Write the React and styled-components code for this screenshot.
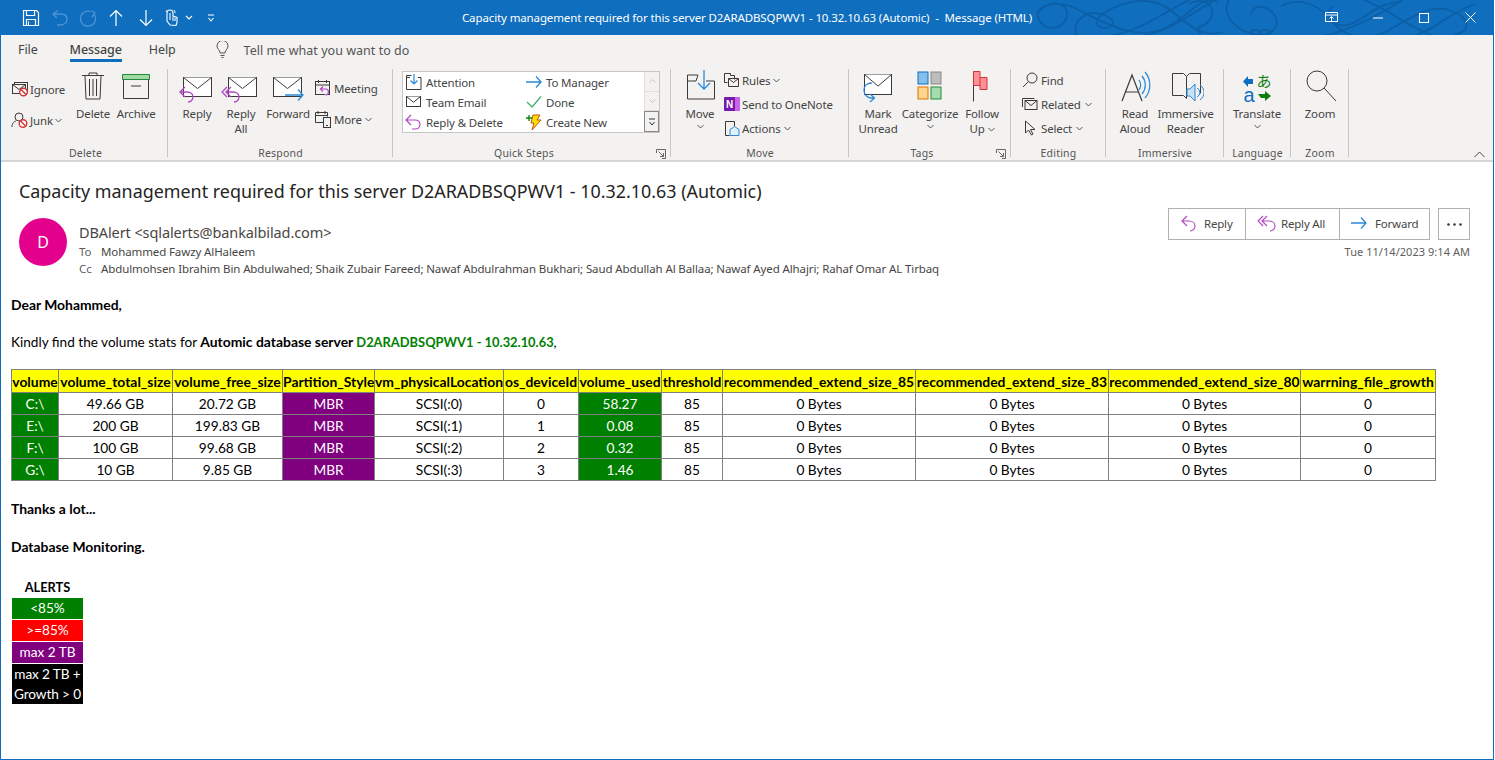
import React from 'react'
import styled, { createGlobalStyle } from 'styled-components'

const BLUE = '#106ebe'
const PURPLE = '#b146c2'
const SKY = '#2b88d8'
const INK = '#3b3a39'
const UI_FONT = '"Noto Sans", "Open Sans", sans-serif'
const MAIL_FONT = 'Lato, "Liberation Sans", sans-serif'

const GlobalStyle = createGlobalStyle`
  html, body { margin: 0; padding: 0; background: #fff; }
  body { font-family: ${UI_FONT}; overflow: hidden; }
  * { box-sizing: border-box; }
`

const Window = styled.div`
  width: 1494px;
  height: 760px;
  display: flex;
  flex-direction: column;
  border: 1px solid ${BLUE};
  border-top: 0;
  background: #fff;
  overflow: hidden;
`

/* title bar */
const TitleBar = styled.header`
  position: relative;
  flex: 0 0 35px;
  display: grid;
  grid-template-columns: 1fr auto 1fr;
  align-items: center;
  background: ${BLUE};
  color: #fff;
`
const Flourish = styled.svg`
  position: absolute;
  right: 0;
  top: 0;
  width: 500px;
  height: 35px;
  pointer-events: none;
`
const QuickAccess = styled.div`
  display: flex;
  align-items: center;
  padding-left: 21px;
  position: relative;
`
const QuickItem = styled.div`
  display: flex;
  margin-left: ${p => p.$gap || 0}px;
`
const Title = styled.div`
  position: relative;
  font-size: 11.5px;
  letter-spacing: -0.12px;
  white-space: pre;
`
const WindowControls = styled.div`
  position: relative;
  display: flex;
  justify-content: flex-end;
`
const WindowButton = styled.div`
  width: 46px;
  height: 35px;
  display: flex;
  align-items: center;
  justify-content: center;
`

/* tabs */
const TabBar = styled.nav`
  flex: 0 0 30px;
  display: flex;
  align-items: flex-start;
  padding-left: 17px;
  background: #f3f2f1;
  color: #444;
  font-size: 12.5px;
`
const Tab = styled.div`
  height: 27px;
  margin-right: ${p => p.$gap}px;
  padding-top: 6px;
  line-height: 18px;
  letter-spacing: -0.1px;
  font-weight: ${p => (p.$active ? 500 : 400)};
  border-bottom: ${p => (p.$active ? `3px solid ${BLUE}` : '0')};
`
const TellMe = styled.div`
  display: flex;
  align-items: center;
  gap: 15px;
  height: 27px;
  margin-left: 40px;
  padding-top: 3px;
  letter-spacing: 0.03px;
  color: #555;
`

/* ribbon */
const Ribbon = styled.section`
  position: relative;
  flex: 0 0 97px;
  display: flex;
  padding-left: 2px;
  background: #f3f2f1;
  border-bottom: 2px solid #d6d5d3;
  color: #444;
  font-size: 11.5px;
  letter-spacing: -0.15px;
  line-height: 15px;
`
const GroupBox = styled.div`
  position: relative;
  width: ${p => p.$width}px;
  height: 95px;
  display: flex;
  flex-direction: column;
  padding-top: 4px;
  &::after {
    content: '';
    position: absolute;
    right: 0;
    top: 4px;
    bottom: 3px;
    width: 1px;
    background: #c8c6c4;
  }
`
const GroupBody = styled.div`
  flex: 1;
  display: flex;
  padding-left: ${p => p.$pad || 0}px;
`
const GroupLabel = styled.div`
  height: 14px;
  padding-right: ${p => (p.$launcher ? 16 : 0)}px;
  text-align: center;
  font-size: 10.5px;
  letter-spacing: 0.2px;
  color: #555;
`
const Launcher = styled.svg`
  position: absolute;
  right: 5px;
  bottom: 1px;
`
const LargeBtn = styled.div`
  width: ${p => p.$width}px;
  margin-left: ${p => p.$left || 0}px;
  display: flex;
  flex-direction: column;
  align-items: center;
  white-space: nowrap;
  text-align: center;
  svg.main { flex: 0 0 36px; margin-bottom: 1px; }
`
const Chevron = styled.svg`
  display: block;
  margin: 3px auto 0;
`
const InlineChevron = styled.svg`
  margin-left: 1px;
`
const UpChevron = styled.svg`
  margin-left: 3px;
  vertical-align: 1px;
`
const SmallStack = styled.div`
  display: flex;
  flex-direction: column;
  gap: ${p => p.$gap}px;
  padding-top: ${p => p.$top}px;
  margin-left: ${p => p.$left || 0}px;
`
const SmallBtn = styled.div`
  display: flex;
  align-items: center;
  gap: ${p => p.$gap || 2}px;
  height: 20px;
  white-space: nowrap;
`
const Gallery = styled.div`
  width: 258px;
  height: 62px;
  margin: 2px 0 0 9px;
  display: flex;
  background: #fff;
  border: 1px solid #c8c6c4;
`
const GalleryGrid = styled.div`
  flex: 1;
  display: grid;
  grid-template-columns: 121px 1fr;
  grid-auto-rows: 20px;
  padding: 0 0 0 2px;
`
const GalleryItem = styled.div`
  display: flex;
  align-items: center;
  gap: 4px;
  white-space: nowrap;
`
const GalleryScroll = styled.div`
  width: 15px;
  display: flex;
  flex-direction: column;
  border-left: 1px solid #e1dfdd;
`
const ScrollBtn = styled.div`
  flex: 1;
  display: flex;
  align-items: center;
  justify-content: center;
  background: #f3f2f1;
  border-bottom: 1px solid #e1dfdd;
  &:last-child {
    border: 1px solid #8a8886;
    margin-left: -1px;
  }
`
const Collapse = styled.svg`
  position: absolute;
  right: 8px;
  bottom: 2px;
`

/* reading pane */
const Pane = styled.main`
  flex: 1;
  padding: 0 23px 0 18px;
  background: #fff;
`
const Subject = styled.h1`
  margin: 16px 0 0;
  font-size: 17.9px;
  line-height: 26px;
  font-weight: 400;
  color: #252423;
`
const HeaderRow = styled.div`
  display: flex;
  justify-content: space-between;
  margin-top: 4px;
  height: 74px;
`
const Sender = styled.div`
  display: flex;
  gap: 12px;
  padding-top: 10px;
`
const Avatar = styled.div`
  width: 48px;
  height: 48px;
  border-radius: 50%;
  background: #e3008c;
  color: #fff;
  font-size: 16px;
  display: flex;
  align-items: center;
  justify-content: center;
`
const SenderLines = styled.div`
  display: flex;
  flex-direction: column;
  padding-top: 4px;
`
const FromLine = styled.div`
  font-size: 14.5px;
  line-height: 20px;
  color: #484644;
  letter-spacing: -0.1px;
`
const RecipientLine = styled.div`
  display: flex;
  font-size: 11.5px;
  line-height: 17px;
  letter-spacing: -0.11px;
  color: #484644;
  margin-top: 1px;
  white-space: nowrap;
  & + & { margin-top: 0; }
`
const RecipientTag = styled.span`
  width: 22px;
  color: #605e5c;
`
const Actions = styled.div`
  display: flex;
  flex-direction: column;
  align-items: flex-end;
  gap: 4px;
`
const ActionRow = styled.div`
  display: flex;
  gap: 8px;
`
const ActionGroup = styled.div`
  display: flex;
  height: 32px;
  border: 1px solid #b3b0ad;
`
const ActionBtn = styled.div`
  display: flex;
  align-items: center;
  gap: 5px;
  width: ${p => p.$width}px;
  padding: 0 0 2px 11px;
  font-size: 11.5px;
  letter-spacing: -0.2px;
  color: #484644;
  & + & { border-left: 1px solid #b3b0ad; }
`
const MoreBtn = styled.div`
  width: 32px;
  height: 32px;
  border: 1px solid #b3b0ad;
  display: flex;
  align-items: center;
  justify-content: center;
`
const DateText = styled.div`
  font-size: 11px;
  letter-spacing: 0.04px;
  color: #605e5c;
`

/* message body */
const MailBody = styled.div`
  margin-left: -8px;
  margin-top: 14px;
  font-family: ${MAIL_FONT};
  font-size: 13.6px;
  color: #000;
  b { font-size: 13.9px; }
`
const Para = styled.p`
  margin: 0 0 ${p => p.$after}px;
  line-height: 17px;
  font-weight: ${p => (p.$bold ? 700 : 400)};
  font-size: ${p => (p.$bold ? '13.9px' : 'inherit')};
  white-space: nowrap;
`
const Highlight = styled.span`
  color: green;
  font-weight: 700;
  font-size: 12.9px;
`
const StatsTable = styled.table`
  border-collapse: collapse;
  table-layout: fixed;
  width: 1425px;
  margin: 0 0 19px;
  th, td {
    border: 1px solid #808080;
    height: 22px;
    padding: 0;
    text-align: center;
    white-space: nowrap;
    overflow: hidden;
  }
  th { background: #ff0; height: 23px; font-weight: 700; font-size: 13.9px; }
  td { font-size: 13.7px; }
`
const Cell = styled.td`
  background: ${p => p.$bg || '#fff'};
  color: ${p => (p.$bg ? '#fff' : '#000')};
`
const Legend = styled.div`
  width: 71px;
  margin: 0 0 0 1px;
  text-align: center;
`
const LegendTitle = styled.div`
  height: 21px;
  line-height: 21px;
  font-size: 12.8px;
  font-weight: 700;
`
const LegendItem = styled.div`
  background: ${p => p.$bg};
  color: #fff;
  line-height: ${p => (p.$tall ? '20px' : '21px')};
  margin-bottom: 1px;
  white-space: nowrap;
  letter-spacing: ${p => (p.$tall ? '-0.1px' : '0')};
`

/* icons */
const Svg = ({ w = 16, h = 16, children, ...rest }) => (
  <svg width={w} height={h} viewBox={`0 0 ${w} ${h}`} fill="none" {...rest}>
    {children}
  </svg>
)

const Chev = ({ as: C = Chevron }) => (
  <C width="7" height="5" viewBox="0 0 7 5" fill="none">
    <path d="M.5 1l3 3 3-3" stroke="#555" />
  </C>
)

const Envelope = ({ x = 0, y = 0, w = 28, h = 19, color = INK }) => (
  <g stroke={color} fill="#fff" transform={`translate(${x} ${y})`}>
    <rect x=".5" y=".5" width={w} height={h} />
    <path d={`M.5 .5l${w / 2} ${h * 0.58} ${w / 2} ${-h * 0.58}`} />
  </g>
)

const ReplyArrow = ({ x = 0, y = 0, color = PURPLE, sw = 1.3 }) => (
  <path
    transform={`translate(${x} ${y})`}
    d="M6 1L1 6l5 5M1 6h7c4 0 6 2.500 6 5s-2 5-5 5"
    stroke={color}
    strokeWidth={sw}
  />
)

const ReplyAllArrow = ({ x = 0, y = 0, sw = 1.3 }) => (
  <path
    transform={`translate(${x} ${y})`}
    d="M6 1L1 6l5 5M10 1L5 6l5 5M5 6h7c4 0 6 2.500 6 5s-2 5-5 5"
    stroke={PURPLE}
    strokeWidth={sw}
  />
)

const ForwardArrow = ({ x = 0, y = 0, len = 18 }) => (
  <path
    transform={`translate(${x} ${y})`}
    d={`M0 6h${len}M${len - 5} 0.5L${len} 6l-5 5.500`}
    stroke={SKY}
    strokeWidth="1.3"
  />
)

const BigIcon = ({ children, w = 40 }) => (
  <svg className="main" width={w} height="36" viewBox={`0 0 ${w} 36`} fill="none">
    {children}
  </svg>
)

const SaveIcon = () => (
  <Svg w={18} h={18}>
    <path d="M1.500 1.500h13l2 2v13h-15z" stroke="#fff" strokeWidth="1.200" />
    <path d="M4.500 1.500v5h8v-5M4.500 16.500v-6h9v6" stroke="#fff" strokeWidth="1.200" />
    <path d="M6.500 12.500v4" stroke="#fff" />
  </Svg>
)
const UndoIcon = () => (
  <Svg w={18} h={18}>
    <path d="M7 1.500L2 5l4 4M2 5h8c4 0 6 2.500 6 5.500S13 16 10 16H6" stroke="#4d94d4" strokeWidth="1.300" />
  </Svg>
)
const RedoIcon = () => (
  <Svg w={18} h={18}>
    <path d="M12 1.500l4 2.500-3 4M15.500 6A7.500 7.500 0 1 1 11 2.500" stroke="#4d94d4" strokeWidth="1.300" />
  </Svg>
)
const ArrowUp = () => (
  <Svg w={14} h={18}>
    <path d="M7 17V1.500M1 7.500l6-6 6 6" stroke="#fff" strokeWidth="1.200" />
  </Svg>
)
const ArrowDown = () => (
  <Svg w={14} h={18}>
    <path d="M7 1v15.500M1 10.500l6 6 6-6" stroke="#fff" strokeWidth="1.200" />
  </Svg>
)
const TouchIcon = () => (
  <Svg w={14} h={18}>
    <path d="M5 16l-3-4V4a3 3 0 0 1 6 0v3l4 1.500v5L11 16.500z" stroke="#fff" strokeWidth="1.100" />
    <path d="M5 4v7M8 8v4M10 9v3" stroke="#fff" />
    <path d="M1 2.500A3.800 3.800 0 0 1 2 1M9 1a4 4 0 0 1 1 3" stroke="#fff" />
  </Svg>
)
const WhiteChev = () => (
  <Svg w={8} h={5}>
    <path d="M1 1l3 3 3-3" stroke="#fff" strokeWidth="1.100" />
  </Svg>
)
const Customize = () => (
  <Svg w={8} h={8}>
    <path d="M1 1h6M1.500 4l2.500 3 2.500-3" stroke="#fff" strokeWidth="1.100" />
  </Svg>
)

const NoSign = ({ x, y }) => (
  <g transform={`translate(${x} ${y})`}>
    <circle cx="4.500" cy="4.500" r="3.800" fill="#fff" stroke="#d13438" strokeWidth="1.400" />
    <path d="M2 2l5 5" stroke="#d13438" strokeWidth="1.400" />
  </g>
)

const IgnoreIcon = () => (
  <Svg w={18} h={16}>
    <rect x="3.500" y="1.500" width="13" height="9" stroke={INK} />
    <rect x="1.500" y="3.500" width="13" height="9" fill="#f3f2f1" stroke={INK} />
    <path d="M1.500 3.500l6.500 5 6.500-5" stroke={INK} />
    <NoSign x={8} y={6.500} />
  </Svg>
)
const JunkIcon = () => (
  <Svg w={18} h={18}>
    <circle cx="8" cy="6" r="4" stroke={INK} />
    <path d="M1 16c0-4 2-5.500 4-6" stroke={INK} />
    <NoSign x={7.500} y={8} />
  </Svg>
)
const CalReply = () => (
  <Svg w={18} h={18}>
    <rect x="1.500" y="2.500" width="14" height="13" stroke={INK} />
    <path d="M1.500 6h14M4.500 1v3M12.500 1v3" stroke={INK} />
    <path d="M9 7.500L6.500 10l2.500 2.500M6.500 10h5c2 0 3 1 3 3s-2 3-3 3" stroke={PURPLE} strokeWidth="1.200" fill="#f3f2f1" />
  </Svg>
)
const CalPhone = () => (
  <Svg w={18} h={18}>
    <path d="M10.500 12.500h-9v-10h12v4M1.500 5.500h12M4 1v3M11 1v3" stroke={INK} />
    <rect x="9.500" y="7.500" width="7" height="10" fill="#f3f2f1" stroke={INK} />
    <path d="M12 15.500h2" stroke={INK} />
  </Svg>
)

const GroupLauncher = () => (
  <Launcher width="10" height="10" viewBox="0 0 10 10" fill="none">
    <path d="M.5 4V.5H9.500V9.500H6" stroke="#666" />
    <path d="M2.500 2.500l5 5M4 7.500h3.500V4" stroke="#666" />
  </Launcher>
)

const columns = [
  ['volume', 47], ['volume_total_size', 114], ['volume_free_size', 110], ['Partition_Style', 92],
  ['vm_physicalLocation', 129], ['os_deviceId', 75], ['volume_used', 83], ['threshold', 61],
  ['recommended_extend_size_85', 193], ['recommended_extend_size_83', 193],
  ['recommended_extend_size_80', 192], ['warrning_file_growth', 135],
]
const rows = [
  ['C:\\', '49.66 GB', '20.72 GB', 'SCSI(:0)', '0', '58.27'],
  ['E:\\', '200 GB', '199.83 GB', 'SCSI(:1)', '1', '0.08'],
  ['F:\\', '100 GB', '99.68 GB', 'SCSI(:2)', '2', '0.32'],
  ['G:\\', '10 GB', '9.85 GB', 'SCSI(:3)', '3', '1.46'],
]

const FlourishArt = () => (
  <Flourish viewBox="0 0 500 35" fill="none">
    <g stroke="#0b5a9e" strokeWidth="1.800" opacity=".75">
      <path d="M44 14c8-14 30-14 30 0s-20 20-28 6 16-22 40-10 60 34 90 16 30-30 50-24" />
      <path d="M84 36c-6-14 8-26 24-22s14 14 4 14-14-10 8-20 44-10 60 4 30 26 50 20" />
      <path d="M116 36c30-4 56-24 80-36M150 36c30-6 50-24 72-36" />
      <path d="M196 4c14-8 28 2 22 14s-20 6-10 16M236 0c-8 14 6 30 24 34s28-8 22-18-20-14-24-2" />
      <path d="M262 36c8 0 6-6 0-6s-4 6 0 6M272 36c8 0 6-6 0-6s-4 6 0 6" />
      <path d="M288 6c20-10 40 0 52 16s34 20 56 8 40-26 60-20 24 22 6 24" />
      <path d="M330 36c30-6 60-24 80-36M370 0c20 6 40 24 70 36M420 36c20-4 40-26 62-32" />
      <path d="M340 6c-12 10 2 24 18 18s24-20 48-22" />
    </g>
  </Flourish>
)

const App = () => (
  <>
    <GlobalStyle />
    <Window>
      <TitleBar>
        <FlourishArt />
        <QuickAccess>
          <QuickItem><SaveIcon /></QuickItem>
          <QuickItem $gap={11}><UndoIcon /></QuickItem>
          <QuickItem $gap={10}><RedoIcon /></QuickItem>
          <QuickItem $gap={12}><ArrowUp /></QuickItem>
          <QuickItem $gap={16}><ArrowDown /></QuickItem>
          <QuickItem $gap={12}><TouchIcon /></QuickItem>
          <QuickItem $gap={6}><WhiteChev /></QuickItem>
          <QuickItem $gap={14}><Customize /></QuickItem>
        </QuickAccess>
        <Title>Capacity management required for this server D2ARADBSQPWV1 - 10.32.10.63 (Automic)  -  Message (HTML)</Title>
        <WindowControls>
          <WindowButton>
            <Svg w={14} h={11}>
              <path d="M.5.500h12v9H.500zM.5 3h12M6.500 9V4.500M4.500 6.500l2-2 2 2" stroke="#fff" />
            </Svg>
          </WindowButton>
          <WindowButton>
            <Svg w={11} h={2}>
              <path d="M0 1h10" stroke="#fff" />
            </Svg>
          </WindowButton>
          <WindowButton>
            <Svg w={10} h={10}>
              <rect x=".5" y=".5" width="9" height="9" stroke="#fff" />
            </Svg>
          </WindowButton>
          <WindowButton>
            <Svg w={11} h={11}>
              <path d="M.5.500l10 10M10.500.500l-10 10" stroke="#fff" />
            </Svg>
          </WindowButton>
        </WindowControls>
      </TitleBar>

      <TabBar>
        <Tab $gap={32}>File</Tab>
        <Tab $gap={27} $active>Message</Tab>
        <Tab $gap={0}>Help</Tab>
        <TellMe>
          <Svg w={13} h={18}>
            <path d="M4 12c0-3-3-4-3-7a5.500 5.500 0 0 1 11 0c0 3-3 4-3 7zM4.500 14.500h4M5.500 16.500h2" stroke="#555" />
          </Svg>
          Tell me what you want to do
        </TellMe>
      </TabBar>

      <Ribbon>
        <GroupBox $width={165}>
          <GroupBody $pad={8}>
            <SmallStack $top={10} $gap={11}>
              <SmallBtn $gap={1}><IgnoreIcon />Ignore</SmallBtn>
              <SmallBtn $gap={1}><JunkIcon />Junk<Chev as={InlineChevron} /></SmallBtn>
            </SmallStack>
            <LargeBtn $width={36} $left={10}>
              <BigIcon w={24}>
                <path d="M1 6.500h22M8 6V4h8v2M4 7l1 23h14l1-23M8.500 10v17M12 10v17M15.500 10v17" stroke={INK} />
              </BigIcon>
              Delete
            </LargeBtn>
            <LargeBtn $width={48} $left={1}>
              <BigIcon w={30}>
                <path d="M1.500 5.500h27v5h-27z" fill="#a3d9a5" stroke="#218a3a" />
                <path d="M2.500 10.500v19h25v-19M10 17h10" stroke={INK} />
              </BigIcon>
              Archive
            </LargeBtn>
          </GroupBody>
          <GroupLabel>Delete</GroupLabel>
        </GroupBox>

        <GroupBox $width={225}>
          <GroupBody $pad={8}>
            <LargeBtn $width={42}>
              <BigIcon>
                <Envelope x={6} y={8} />
                <ReplyArrow x={2} y={17} />
              </BigIcon>
              Reply
            </LargeBtn>
            <LargeBtn $width={46}>
              <BigIcon>
                <Envelope x={7} y={8} />
                <ReplyAllArrow x={0} y={17} />
              </BigIcon>
              <span>Reply<br />All</span>
            </LargeBtn>
            <LargeBtn $width={48}>
              <BigIcon>
                <Envelope x={5} y={8} />
                <ForwardArrow x={17} y={20} />
              </BigIcon>
              Forward
            </LargeBtn>
            <SmallStack $top={9} $gap={11} $left={2}>
              <SmallBtn><CalReply />Meeting</SmallBtn>
              <SmallBtn><CalPhone />More<Chev as={InlineChevron} /></SmallBtn>
            </SmallStack>
          </GroupBody>
          <GroupLabel>Respond</GroupLabel>
        </GroupBox>

        <GroupBox $width={278}>
          <GroupBody>
            <Gallery>
              <GalleryGrid>
                <GalleryItem>
                  <Svg w={17} h={17}>
                    <path d="M5 3.500H1.500V15.500H16V3.500h-3M1.500 3.500V1.500h5" stroke={INK} />
                    <path d="M9 0v10M5.500 6.500L9 10l3.500-3.500" stroke={SKY} strokeWidth="1.200" />
                  </Svg>
                  Attention
                </GalleryItem>
                <GalleryItem>
                  <Svg w={16} h={14}><ForwardArrow x={0} y={1} len={15} /></Svg>
                  To Manager
                </GalleryItem>
                <GalleryItem>
                  <Svg w={17} h={14}><Envelope x={1} y={1} w={14} h={10} /></Svg>
                  Team Email
                </GalleryItem>
                <GalleryItem>
                  <Svg w={16} h={14}>
                    <path d="M1 7l5 5L15 1.500" stroke="#3fae6a" strokeWidth="1.200" />
                  </Svg>
                  Done
                </GalleryItem>
                <GalleryItem>
                  <Svg w={17} h={17}>
                    <path d="M6 1L1 6l5 5M1 6h9c3 0 5 2 5 4.500S13 15 10 15H7" stroke={PURPLE} strokeWidth="1.200" />
                  </Svg>
                  Reply &amp; Delete
                </GalleryItem>
                <GalleryItem>
                  <Svg w={16} h={17}>
                    <path d="M7 1h7l-3 5h4L6 16l2-7H5z" fill="#fce100" stroke="#ca5010" />
                    <path d="M3 1v6M0 4h6" stroke="#107c10" strokeWidth="1.300" />
                  </Svg>
                  Create New
                </GalleryItem>
              </GalleryGrid>
              <GalleryScroll>
                <ScrollBtn><Svg w={7} h={4}><path d="M.5 3.500l3-3 3 3" stroke="#c8c6c4" /></Svg></ScrollBtn>
                <ScrollBtn><Svg w={7} h={4}><path d="M.5.500l3 3 3-3" stroke="#c8c6c4" /></Svg></ScrollBtn>
                <ScrollBtn><Svg w={8} h={8}><path d="M1 1h6M1.500 4l2.500 3 2.500-3" stroke="#333" /></Svg></ScrollBtn>
              </GalleryScroll>
            </Gallery>
          </GroupBody>
          <GroupLabel $launcher>Quick Steps</GroupLabel>
          <GroupLauncher />
        </GroupBox>

        <GroupBox $width={178}>
          <GroupBody $pad={11}>
            <LargeBtn $width={36}>
              <BigIcon w={32}>
                <path d="M14 6H3.500v24h27V12H22M3.500 12H12l2-6" stroke={INK} />
                <path d="M20 1v19M14 14l6 6 6-6" stroke={SKY} strokeWidth="1.300" />
              </BigIcon>
              Move
              <Chev />
            </LargeBtn>
            <SmallStack $top={1} $gap={4} $left={5}>
              <SmallBtn>
                <Svg w={17} h={16}>
                  <path d="M1.500 1.500h6v2h4v4M1.500 1.500v9h3" stroke={INK} />
                  <path d="M5.500 6.500h10v8h-10zM5.500 6.500l5 4 5-4" stroke={INK} fill="#f3f2f1" />
                </Svg>
                Rules<Chev as={InlineChevron} />
              </SmallBtn>
              <SmallBtn>
                <Svg w={17} h={16}>
                  <rect x="9" y="1" width="8" height="14" fill="#ca64ea" />
                  <rect x="1" y="1" width="11" height="14" rx="1" fill="#7719aa" />
                  <text x="6.500" y="12" fontSize="10" fontWeight="700" fill="#fff" textAnchor="middle" fontFamily="Liberation Sans, sans-serif">N</text>
                </Svg>
                Send to OneNote
              </SmallBtn>
              <SmallBtn>
                <Svg w={17} h={17}>
                  <path d="M2.500 1.500h9v5M2.500 1.500v14h4" stroke={INK} />
                  <path d="M7 9.500l4.500-3 4.500 3v6H7z" fill="#dff0fb" stroke={SKY} />
                </Svg>
                Actions<Chev as={InlineChevron} />
              </SmallBtn>
            </SmallStack>
          </GroupBody>
          <GroupLabel>Move</GroupLabel>
        </GroupBox>

        <GroupBox $width={162}>
          <GroupBody>
            <LargeBtn $width={58}>
              <BigIcon>
                <Envelope x={6} y={5} w={27} h={20} />
                <path d="M14 14c-5 0-8 3-8 7s3 8 7 8h3M12 25l4.500 4-4.500 4" stroke={SKY} strokeWidth="1.300" fill="none" />
              </BigIcon>
              <span>Mark<br />Unread</span>
            </LargeBtn>
            <LargeBtn $width={46}>
              <BigIcon w={30}>
                <rect x="3" y="3" width="10" height="12" fill="#86bfea" stroke="#106ebe" />
                <rect x="16" y="3" width="10" height="12" fill="#bdbdbd" stroke="#8a8886" />
                <rect x="3" y="18" width="10" height="12" fill="#fcd58e" stroke="#e07000" />
                <rect x="16" y="18" width="10" height="12" fill="#a4dcae" stroke="#218a3a" />
              </BigIcon>
              Categorize
              <Chev />
            </LargeBtn>
            <LargeBtn $width={50} $left={4}>
              <BigIcon w={28}>
                <path d="M5.500 2.500v30" stroke={INK} />
                <path d="M5.500 2.500H12v6h7v12h-7v-4H5.500z" fill="#ff9097" stroke="#d13438" />
                <path d="M12 8.500v8" stroke="#d13438" />
              </BigIcon>
              <span>Follow<br />Up<Chev as={UpChevron} /></span>
            </LargeBtn>
          </GroupBody>
          <GroupLabel $launcher>Tags</GroupLabel>
          <GroupLauncher />
        </GroupBox>

        <GroupBox $width={95}>
          <GroupBody $pad={11}>
            <SmallStack $top={1} $gap={4}>
              <SmallBtn $gap={3}>
                <Svg w={16} h={16}>
                  <circle cx="10" cy="6" r="5" stroke={INK} />
                  <path d="M6.500 9.500L1 15" stroke={INK} />
                </Svg>
                Find
              </SmallBtn>
              <SmallBtn $gap={3}>
                <Svg w={16} h={14}>
                  <path d="M.5 10V1.500h12" stroke={INK} />
                  <rect x="3" y="3.500" width="12" height="9" stroke={INK} />
                  <path d="M3 3.500l6 5 6-5" stroke={INK} />
                </Svg>
                Related<Chev as={InlineChevron} />
              </SmallBtn>
              <SmallBtn $gap={3}>
                <Svg w={16} h={16}>
                  <path d="M3.500 1v12l3-3 3 5 1.500-1-2.500-4.500H13z" stroke={INK} />
                </Svg>
                Select<Chev as={InlineChevron} />
              </SmallBtn>
            </SmallStack>
          </GroupBody>
          <GroupLabel>Editing</GroupLabel>
        </GroupBox>

        <GroupBox $width={118}>
          <GroupBody $pad={5}>
            <LargeBtn $width={48}>
              <BigIcon w={36}>
                <path d="M5 32L15 6l10 26M8.500 23h13" stroke={INK} strokeWidth="1.200" />
                <path d="M22 11a9 9 0 0 1 0 10M25 7a14 14 0 0 1 0 18M28 3a20 20 0 0 1 0 26" stroke={SKY} strokeWidth="1.200" />
              </BigIcon>
              <span>Read<br />Aloud</span>
            </LargeBtn>
            <LargeBtn $width={53}>
              <BigIcon w={36}>
                <path d="M4.500 4.500h11l3 3v22l-3-3h-11zM18.500 7.500l3-3h11v20" stroke={INK} />
                <path d="M19 20h3l5-5v17l-5-5h-3z" fill="#c7e0f4" stroke={SKY} />
                <path d="M29 19a5 5 0 0 1 0 9M32 16a9 9 0 0 1 0 15" stroke={SKY} />
              </BigIcon>
              <span>Immersive<br />Reader</span>
            </LargeBtn>
          </GroupBody>
          <GroupLabel>Immersive</GroupLabel>
        </GroupBox>

        <GroupBox $width={67}>
          <GroupBody $pad={4}>
            <LargeBtn $width={58}>
              <BigIcon w={30}>
                <path d="M6 7L1 12.500 6 18v-3h5V10H6z" fill={BLUE} />
                <text x="22" y="18" fontSize="15" fill="#107c10" textAnchor="middle" fontFamily="Noto Sans CJK JP, sans-serif">あ</text>
                <text x="7" y="33" fontSize="20" fill={BLUE} textAnchor="middle" fontFamily="Liberation Sans, sans-serif">a</text>
                <path d="M16 25h7v-3l6 5-6 5v-3h-4z" fill="#107c10" />
              </BigIcon>
              Translate
              <Chev />
            </LargeBtn>
          </GroupBody>
          <GroupLabel>Language</GroupLabel>
        </GroupBox>

        <GroupBox $width={58}>
          <GroupBody>
            <LargeBtn $width={58}>
              <BigIcon w={34}>
                <circle cx="14" cy="12" r="10" stroke={INK} />
                <path d="M21 19l12 13" stroke={INK} />
              </BigIcon>
              Zoom
            </LargeBtn>
          </GroupBody>
          <GroupLabel>Zoom</GroupLabel>
        </GroupBox>

        <Collapse width="11" height="7" viewBox="0 0 11 7" fill="none">
          <path d="M.5 6l5-5 5 5" stroke="#444" />
        </Collapse>
      </Ribbon>

      <Pane>
        <Subject>Capacity management required for this server D2ARADBSQPWV1 - 10.32.10.63 (Automic)</Subject>
        <HeaderRow>
          <Sender>
            <Avatar>D</Avatar>
            <SenderLines>
              <FromLine>DBAlert &lt;sqlalerts@bankalbilad.com&gt;</FromLine>
              <RecipientLine><RecipientTag>To</RecipientTag>Mohammed Fawzy AlHaleem</RecipientLine>
              <RecipientLine>
                <RecipientTag>Cc</RecipientTag>
                Abdulmohsen Ibrahim Bin Abdulwahed; Shaik Zubair Fareed; Nawaf Abdulrahman Bukhari; Saud Abdullah Al Ballaa; Nawaf Ayed Alhajri; Rahaf Omar AL Tirbaq
              </RecipientLine>
            </SenderLines>
          </Sender>
          <Actions>
            <ActionRow>
              <ActionGroup>
                <ActionBtn $width={76}>
                  <Svg w={19} h={17}><ReplyArrow x={1} y={0} sw={1.1} /></Svg>
                  Reply
                </ActionBtn>
                <ActionBtn $width={94}>
                  <Svg w={19} h={17}><ReplyAllArrow x={0} y={0} sw={1.1} /></Svg>
                  Reply All
                </ActionBtn>
                <ActionBtn $width={90}>
                  <Svg w={19} h={12}><ForwardArrow x={0} y={0} len={15} /></Svg>
                  Forward
                </ActionBtn>
              </ActionGroup>
              <MoreBtn>
                <Svg w={15} h={3}>
                  <circle cx="1.500" cy="1.500" r="1.300" fill={INK} />
                  <circle cx="7.500" cy="1.500" r="1.300" fill={INK} />
                  <circle cx="13.500" cy="1.500" r="1.300" fill={INK} />
                </Svg>
              </MoreBtn>
            </ActionRow>
            <DateText>Tue 11/14/2023 9:14 AM</DateText>
          </Actions>
        </HeaderRow>

        <MailBody>
          <Para $bold $after={20}>Dear Mohammed,</Para>
          <Para $after={18}>
            Kindly find the volume stats for <b>Automic database server </b>
            <Highlight>D2ARADBSQPWV1 - 10.32.10.63</Highlight>,
          </Para>
          <StatsTable>
            <colgroup>
              {columns.map(([name, width]) => <col key={name} style={{ width }} />)}
            </colgroup>
            <thead>
              <tr>{columns.map(([name]) => <th key={name}>{name}</th>)}</tr>
            </thead>
            <tbody>
              {rows.map(([vol, total, free, location, id, used]) => (
                <tr key={vol}>
                  <Cell $bg="green">{vol}</Cell>
                  <Cell>{total}</Cell>
                  <Cell>{free}</Cell>
                  <Cell $bg="purple">MBR</Cell>
                  <Cell>{location}</Cell>
                  <Cell>{id}</Cell>
                  <Cell $bg="green">{used}</Cell>
                  <Cell>85</Cell>
                  <Cell>0 Bytes</Cell>
                  <Cell>0 Bytes</Cell>
                  <Cell>0 Bytes</Cell>
                  <Cell>0</Cell>
                </tr>
              ))}
            </tbody>
          </StatsTable>
          <Para $bold $after={21}>Thanks a lot...</Para>
          <Para $bold $after={22}>Database Monitoring.</Para>
          <Legend>
            <LegendTitle>ALERTS</LegendTitle>
            <LegendItem $bg="green">&lt;85%</LegendItem>
            <LegendItem $bg="red">&gt;=85%</LegendItem>
            <LegendItem $bg="purple">max 2 TB</LegendItem>
            <LegendItem $bg="#000" $tall>max 2 TB +<br />Growth &gt; 0</LegendItem>
          </Legend>
        </MailBody>
      </Pane>
    </Window>
  </>
)

export default App
